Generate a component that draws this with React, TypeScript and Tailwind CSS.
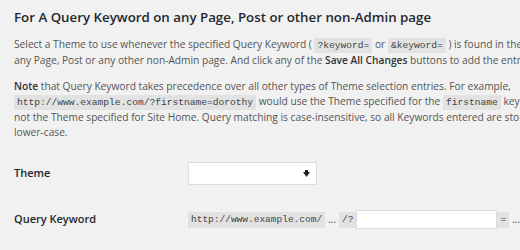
import React from 'react';

const Code: React.FC<{ children: React.ReactNode }> = ({ children }) => (
  <code className="bg-[#e2e2e2] px-[3px] py-[2px] font-['Liberation_Mono',monospace] text-[9.6px] text-[#444]">
    {children}
  </code>
);

const App: React.FC = () => {
  return (
    <div className="h-[250px] w-[520px] overflow-hidden bg-[#f1f1f1] font-['Open_Sans',sans-serif] text-[#555]">
      <div className="w-[700px] pl-[14px] pt-[7px]">
        <h3 className="text-[13.3px] leading-[20px] font-semibold text-[#23282d]">
          For A Query Keyword on any Page, Post or other non-Admin page
        </h3>

        <div className="mt-[10px] text-[10.2px] leading-[15px] whitespace-nowrap">
          <div>
            Select a Theme to use whenever the specified Query Keyword ( <Code>?keyword=</Code> or{' '}
            <Code>&amp;keyword=</Code> ) is found in the URL of
          </div>
          <div>
            any Page, Post or any other non-Admin page. And click any of the{' '}
            <b className="font-semibold text-[#333]">Save All Changes</b> buttons to add the entry.
          </div>
        </div>

        <div className="mt-[11px] text-[10.2px] leading-[15px] whitespace-nowrap">
          <div>
            <b className="font-semibold text-[#333]">Note</b> that Query Keyword takes precedence over all
            other types of Theme selection entries. For example,
          </div>
          <div>
            <Code>http://www.example.com/?firstname=dorothy</Code> would use the Theme specified for the{' '}
            <Code>firstname</Code> keyword,
          </div>
          <div>
            not the Theme specified for Site Home. Query matching is case-insensitive, so all Keywords
            entered are stored in
          </div>
          <div>lower-case.</div>
        </div>

        <div className="mt-[22px] flex items-center">
          <div className="w-[174px] text-[11px] font-semibold text-[#23282d]">Theme</div>
          <div className="flex h-[23px] w-[129px] items-center justify-end border border-[#ddd] bg-white pr-[6px]">
            <svg width="7" height="7" viewBox="0 0 7 7">
              <rect x="2" y="0" width="3" height="2" fill="#222" />
              <path d="M0 2 L7 2 L3.5 7 Z" fill="#222" />
            </svg>
          </div>
        </div>

        <div className="mt-[25px] flex items-center">
          <div className="w-[174px] text-[11px] font-semibold text-[#23282d]">Query Keyword</div>
          <div className="flex items-center text-[10px] whitespace-nowrap">
            <span className="bg-[#e2e2e2] px-[3px] py-[2px] font-['Liberation_Mono',monospace] text-[9.5px] leading-[12px] text-[#444]">
              http://www.example.com/
            </span>
            <span className="px-[3px]">...</span>
            <span className="bg-[#e2e2e2] px-[3px] py-[2px] font-['Liberation_Mono',monospace] text-[9.5px] leading-[12px] text-[#444]">
              /?
            </span>
            <input
              type="text"
              className="h-[19px] w-[141px] border border-[#ddd] bg-white outline-none"
            />
            <span className="bg-[#e2e2e2] px-[3px] py-[2px] font-['Liberation_Mono',monospace] text-[9.5px] leading-[12px] text-[#444]">
              =
            </span>
            <span className="px-[3px]">...</span>
          </div>
        </div>
      </div>
    </div>
  );
};

export default App;
